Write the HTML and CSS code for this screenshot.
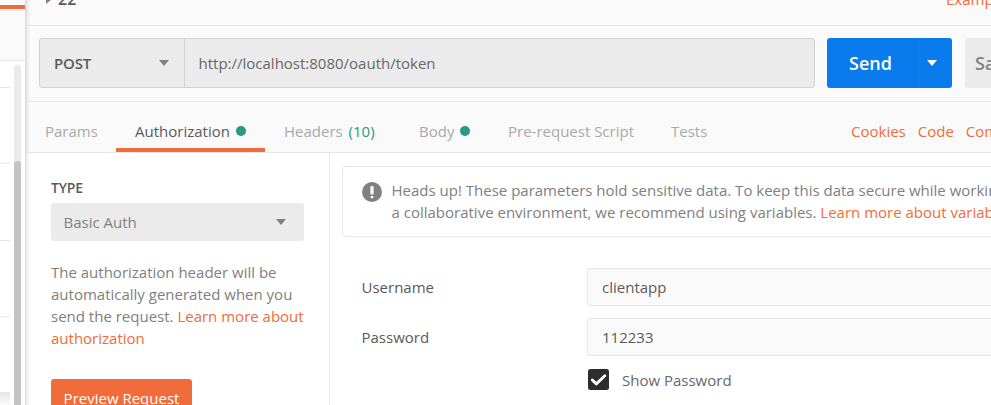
FILE: index.html
```html
<!DOCTYPE html>
<html lang="en">
<head>
<meta charset="utf-8">
<title>Request builder</title>
<link rel="stylesheet" href="styles.css">
</head>
<body>
<div class="app">
  <aside class="history">
    <div class="history-tab"></div>
    <div class="history-body">
      <div class="rows"><i></i><i></i><i></i><i></i><i class="fade"></i></div>
      <div class="scroll"><div class="thumb"></div></div>
    </div>
  </aside>
  <main class="request">
    <header class="title-row">
      <svg class="title-arrow" width="6" height="10" viewBox="0 0 6 10"><path d="M0 0L6 5L0 10Z" fill="#808080"/></svg>
      <b class="title">22</b>
      <a class="examples">Examples (0)</a>
    </header>
    <section class="url-row">
      <div class="url-box">
        <div class="method"><span>POST</span><svg width="10" height="6" viewBox="0 0 10 6"><path d="M0 0H10L5 6Z" fill="#808080"/></svg></div>
        <div class="url">http://localhost:8080/oauth/token</div>
      </div>
      <div class="send"><span>Send</span><div class="send-more"><svg width="10" height="6" viewBox="0 0 10 6"><path d="M0 0H10L5 6Z" fill="#fff"/></svg></div></div>
      <div class="save">Save</div>
    </section>
    <nav class="tabs">
      <span class="tab params">Params</span>
      <span class="tab active"><span>Authorization</span><i class="dot"></i></span>
      <span class="tab headers">Headers <em>(10)</em></span>
      <span class="tab body-tab">Body<i class="dot"></i></span>
      <span class="tab prereq">Pre-request Script</span>
      <span class="tab">Tests</span>
      <div class="links"><a>Cookies</a><a>Code</a><a>Comments (0)</a></div>
    </nav>
    <div class="auth">
      <section class="auth-type">
        <h2>TYPE</h2>
        <div class="select"><span>Basic Auth</span><svg width="10" height="6" viewBox="0 0 10 6"><path d="M0 0H10L5 6Z" fill="#808080"/></svg></div>
        <p>The authorization header will be<br>automatically generated when you<br>send the request. <a>Learn more about<br>authorization</a></p>
        <div class="preview">Preview Request</div>
      </section>
      <section class="credentials">
        <div class="notice">
          <svg width="20" height="20" viewBox="0 0 20 20"><circle cx="10" cy="10" r="10" fill="#808080"/><rect x="8.4" y="4" width="3.2" height="8.6" rx="1.2" fill="#fff"/><rect x="8.6" y="14" width="2.8" height="2.2" rx=".6" fill="#fff"/></svg>
          <p>Heads up! These parameters hold sensitive data. To keep this data secure while working in<br>a collaborative environment, we recommend using variables. <a>Learn more about variables</a></p>
        </div>
        <div class="field"><label>Username</label><div class="input">clientapp</div></div>
        <div class="field"><label>Password</label><div class="input">112233</div></div>
        <div class="show">
          <svg width="21" height="21" viewBox="0 0 21 21"><rect width="21" height="21" rx="2.5" fill="#2d2d2d"/><path d="M4.3 11L8.3 14.9L16.8 6.7" fill="none" stroke="#fff" stroke-width="2.9" stroke-linecap="round" stroke-linejoin="round"/></svg>
          <span>Show Password</span>
        </div>
      </section>
    </div>
  </main>
</div>
</body>
</html>
```
FILE: styles.css
```css
* { box-sizing: border-box; }
body { margin: 0; background: #fff; font: 15px/22px "Open Sans", sans-serif; color: #5a5a5a; overflow: hidden; }
h2, p { margin: 0; }
a { color: #f26b3a; }
svg { display: block; flex: none; }
.app { display: flex; width: 991px; height: 405px; overflow: hidden; white-space: nowrap; }

.history { flex: none; width: 25px; display: flex; flex-direction: column; }
.history-tab { height: 61px; flex: none; background: linear-gradient(#fafafa 5px, #f26b3a 5px 9px, #fafafa 9px 10px, #e6e6e6 10px 11px, #fafafa 11px); border-bottom: 1px solid #e6e6e6; }
.history-body { flex: 1; display: flex; gap: 4px; }
.rows { width: 10px; display: flex; flex-direction: column; }
.rows i { height: 76.3px; flex: none; border-bottom: 1px solid #e6e6e6; }
.rows i:first-child { height: 27px; }
.rows .fade { height: 75px; border: 0; }
.rows::after { content: ""; flex: 1; background: linear-gradient(#e6e6e6, #fafafa); }
.scroll { width: 7px; margin-top: 4px; background: #ebebeb; border-radius: 3px 3px 0 0; padding-top: 96px; }
.thumb { height: 100%; background: #c4c4c4; border-radius: 3px 3px 0 0; }

.request { flex: 1; min-width: 0; border-left: 1px solid #dcdcdc; background: linear-gradient(90deg, rgba(0,0,0,.09), transparent 4px), linear-gradient(#fafafa 152px, #fff 152px); display: flex; flex-direction: column; }
.title-row { height: 26px; flex: none; border-bottom: 1px solid #e6e6e6; display: flex; padding-left: 20px; }
.title-arrow { margin-top: -6px; }
.title { margin: -12px 0 0 6px; font-size: 16px; font-weight: 600; }
.examples { margin: -12px 0 0 auto; width: 45px; }
.url-row { height: 76px; flex: none; display: flex; padding: 12px 0 13px 13px; border-bottom: 1px solid #e6e6e6; overflow: hidden; }
.url-box { width: 776px; height: 50px; flex: none; display: flex; align-items: center; border: 1px solid #d2d2d2; border-radius: 3px; background: #ebebeb; }
.method { width: 145px; height: 48px; display: flex; align-items: center; justify-content: space-between; padding: 0 15px 0 14px; border-right: 1px solid #d2d2d2; font-weight: 600; font-size: 15px; letter-spacing: -.2px; }
.url { padding-left: 13.5px; color: #686868; }
.send { width: 125px; height: 50px; flex: none; margin-left: 12px; display: flex; align-items: center; background: #097bed; color: #fff; border-radius: 3px; padding-left: 22px; font-weight: 600; font-size: 18px; }
.send-more { margin-left: auto; width: 38px; height: 50px; border-left: 1px solid #0874e2; display: flex; align-items: center; padding-left: 12px; }
.save { height: 50px; flex: none; width: 70px; margin-left: 13px; padding-left: 10px; line-height: 50px; border-radius: 3px; background: #ebebeb; color: #808080; font-weight: 600; font-size: 18px; }

.tabs { height: 51px; flex: none; display: flex; align-items: stretch; padding-left: 19px; border-bottom: 1px solid #e6e6e6; color: #a9a9a9; }
.tab { display: flex; align-items: center; padding-top: 8px; flex: none; white-space: pre; }
.tab em { font-style: normal; color: #29998a; margin-left: 2px; }
.dot { width: 10px; height: 10px; border-radius: 50%; background: #26997f; margin: -1px 0 0 6px; }
.params { width: 71px; }
.active { width: 149px; padding: 12px 0 0 19px; border-bottom: 4px solid #f26b3a; color: #5a5a5a; }
.headers { margin-left: 19px; width: 135px; }
.body-tab { width: 89px; }
.prereq { width: 163px; }
.links { display: flex; gap: 12px; margin-left: auto; width: 140px; padding-top: 18px; overflow: hidden; }

.auth { flex: 1; display: flex; min-height: 0; }
.auth-type { width: 304px; flex: none; padding: 24px 0 0 25px; border-right: 1px solid #e6e6e6; color: #808080; }
.auth-type h2 { font-size: 14px; font-weight: 600; letter-spacing: -.2px; color: #5a5a5a; }
.select { width: 253px; height: 38px; margin: 4px 0 20px; padding: 0 18px 0 12.5px; display: flex; align-items: center; justify-content: space-between; background: #ebebeb; border-radius: 3px; }
.preview { margin-top: 30px; width: 141px; height: 40px; line-height: 39px; text-align: center; background: #f26b3a; color: #fff; border-radius: 3px; }
.credentials { flex: 1; min-width: 0; padding: 13px 0 0 12px; overflow: hidden; }
.notice { width: 700px; height: 71px; margin-bottom: 31px; padding: 12px 0 0 19px; display: flex; gap: 9.5px; border: 1px solid #e6e6e6; border-radius: 4px; color: #808080; }
.notice svg { margin-top: 3px; }
.field { display: flex; align-items: center; height: 38px; margin: 0 0 12px 19.5px; }
.field label { width: 225.5px; flex: none; }
.input { width: 460px; flex: none; height: 38px; line-height: 37px; padding-left: 14px; border: 1px solid #e6e6e6; border-radius: 3px; background: #fafafa; }
.show { display: flex; align-items: center; gap: 13px; margin-left: 246px; height: 24px; color: #686868; }
.show svg { margin-top: -2px; }
```
